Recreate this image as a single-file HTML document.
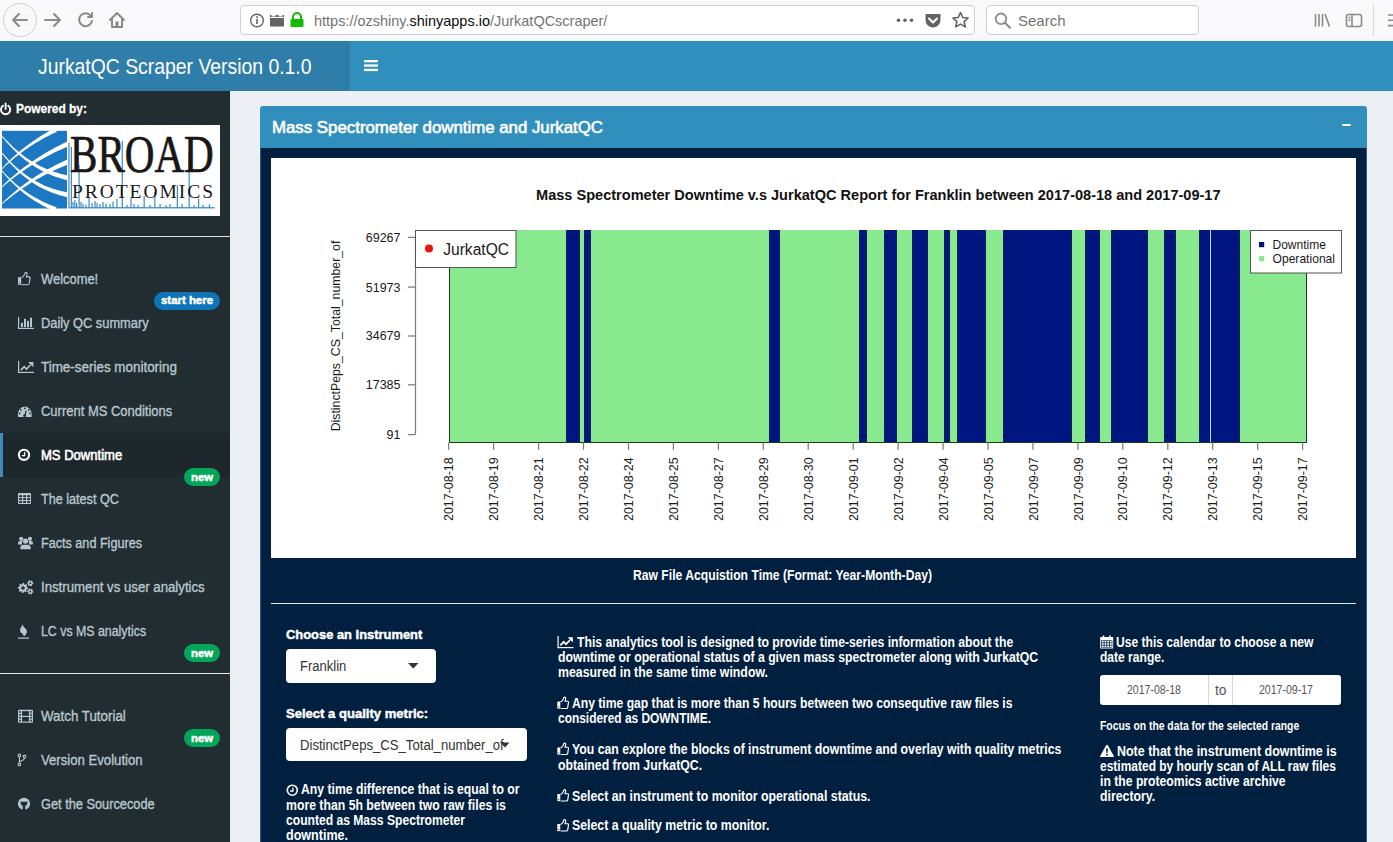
<!DOCTYPE html>
<html><head><meta charset="utf-8">
<style>
html,body{margin:0;padding:0;width:1393px;height:842px;overflow:hidden;background:#ecf0f5;font-family:"Liberation Sans",sans-serif;}
.a{position:absolute;}
.t{position:absolute;white-space:nowrap;line-height:1;transform-origin:0 0;}
#chrome{left:0;top:0;width:1393px;height:40px;background:#f9f9fb;border-bottom:1px solid #f0f6fa;}
#logo{left:0;top:41px;width:350px;height:50px;background:#2f7eaa;}
#nav{left:350px;top:41px;width:1043px;height:50px;background:#318fbe;}
#side{left:0;top:91px;width:230px;height:751px;background:#222d32;}
#boxh{left:260px;top:106px;width:1107px;height:42px;background:#318fbe;border-radius:3px 3px 0 0;}
#boxb{left:260px;top:148px;width:1107px;height:700px;background:#012040;}
.badge{position:absolute;height:18px;border-radius:9px;color:#fff;font-weight:700;font-size:11.5px;line-height:18px;text-align:center;}
</style></head><body>
<div id="chrome" class="a"></div>
<!-- url bar -->
<div class="a" style="left:240px;top:5px;width:733px;height:28px;background:#fff;border:1px solid #cfcfd3;border-radius:4px;"></div>
<div class="a" style="left:986px;top:5px;width:211px;height:28px;background:#fff;border:1px solid #cfcfd3;border-radius:4px;"></div>
<div class="a" style="left:1373px;top:4px;width:1px;height:32px;background:#dcdcde;"></div>
<div class="a" style="left:3px;top:3px;width:32px;height:32px;border:1px solid #cfcfd3;border-radius:50%;"></div>
<svg class="a" style="left:0;top:0" width="1393" height="40" viewBox="0 0 1393 40">
 <g fill="none" stroke="#8a8a8d" stroke-width="2" stroke-linecap="round" stroke-linejoin="round">
  <path d="M13 20h14M19 14l-6 6 6 6"/>
  <path d="M45 20h15M54 14l6 6-6 6"/>
  <path d="M91 16a6.5 6.5 0 1 0 1 5"/><path d="M92 13v4h-4"/>
  <path d="M110 20l7-7 7 7M112 19v8h10v-8"/>
  <circle cx="257" cy="20.5" r="6.3" stroke="#636366" stroke-width="1.4"/>
 </g>
 <path d="M256.2 19h1.6v5h-1.6zM256.2 16.3h1.6v1.6h-1.6z" fill="#636366"/>
 <rect x="115.5" y="21.5" width="3" height="5.5" fill="#8a8a8d"/>
 <path d="M270 15h14v2h-14zM270 18h14v8.5h-14z" fill="#636366"/>
 <path d="M271.5 14.5h4v2h-4zM278.5 14.5h4v2h-4z" fill="#f9f9fa"/>
 <rect x="290.5" y="19" width="13" height="8" rx="1" fill="#12bc00"/>
 <path d="M293 19.5v-2.5a4 4 0 0 1 8 0v2.5" fill="none" stroke="#12bc00" stroke-width="2"/>
 <g fill="#636366"><circle cx="898.5" cy="20.3" r="1.8"/><circle cx="905" cy="20.3" r="1.8"/><circle cx="911.5" cy="20.3" r="1.8"/></g>
 <path d="M925.5 14h15v6a7.5 7.5 0 0 1-15 0z" fill="#636366"/>
 <path d="M929 18.5l4 4 4-4" fill="none" stroke="#fff" stroke-width="2" stroke-linecap="round" stroke-linejoin="round"/>
 <path d="M960.5 12.5l2.3 5 5.3.5-4 3.6 1.2 5.3-4.8-2.8-4.8 2.8 1.2-5.3-4-3.6 5.3-.5z" fill="none" stroke="#636366" stroke-width="1.6" stroke-linejoin="round"/>
 <circle cx="1001" cy="18.8" r="5.3" fill="none" stroke="#8a8a8d" stroke-width="1.8"/>
 <path d="M1005 22.8l5 5" stroke="#8a8a8d" stroke-width="2" stroke-linecap="round"/>
 <g stroke="#8a8a8d" stroke-width="1.6" fill="none">
  <path d="M1315.5 14v12.5M1319 14v12.5M1322.5 14v12.5M1325 14l4.5 12.5"/>
  <rect x="1346.5" y="14.5" width="15" height="12" rx="2"/>
  <path d="M1352 14.5v12M1348.5 17.5h2M1348.5 20h2"/>
  <path d="M1388 15h6M1388 20.3h6M1388 25.6h6"/>
 </g>
</svg>
<div class="t" style="left:314px;top:13.3px;font-size:15px;color:#737373;transform:scaleX(0.965)">https://ozshiny.<span style="color:#0c0c0d">shinyapps.io</span>/JurkatQCscraper/</div>
<div class="t" style="left:1018px;top:12.8px;font-size:15px;color:#737373;">Search</div>

<div id="logo" class="a"></div>
<div id="nav" class="a"></div>
<svg class="a" style="left:364px;top:60px" width="14" height="12"><rect x="0" y="0" width="14" height="2.3" fill="#fff"/><rect x="0" y="4.4" width="14" height="2.3" fill="#fff"/><rect x="0" y="8.8" width="14" height="2.3" fill="#fff"/></svg>

<div id="side" class="a"></div>
<div class="a" style="left:0;top:236px;width:230px;height:1px;background:#dfe3e6;"></div>
<div class="a" style="left:0;top:673px;width:230px;height:1px;background:#e6e9eb;"></div>
<div class="a" style="left:0;top:433px;width:230px;height:44px;background:#1e282c;"></div>
<div class="a" style="left:0;top:433px;width:3px;height:44px;background:#3c8dbc;"></div>
<div class="a" style="left:154px;top:292px;width:66px;height:18px;border-radius:9px;background:#0e75b6;"></div>
<div class="a" style="left:184px;top:468px;width:36px;height:18px;border-radius:9px;background:#02a55a;"></div>
<div class="a" style="left:184px;top:644px;width:36px;height:18px;border-radius:9px;background:#02a55a;"></div>
<div class="a" style="left:184px;top:729px;width:36px;height:18px;border-radius:9px;background:#02a55a;"></div>
<svg class="a" style="left:0;top:125px" width="220" height="91" viewBox="0 125 220 91">
<rect x="0" y="125" width="220" height="91" fill="#fff"/>
<rect x="2" y="130.8" width="65" height="77.7" fill="#1c78c2"/>
<polygon points="2.28,169.15 4.65,166.85 7.06,164.59 9.50,162.38 11.98,160.21 14.50,158.10 17.06,156.03 19.65,154.00 22.28,152.02 24.95,150.09 27.65,148.21 30.39,146.37 33.17,144.57 35.99,142.83 38.84,141.13 41.73,139.47 44.66,137.86 47.63,136.30 50.63,134.78 53.67,133.31 56.75,131.88 54.91,128.11 51.85,129.71 48.83,131.37 45.85,133.06 42.92,134.81 40.02,136.59 37.17,138.42 34.36,140.30 31.59,142.21 28.87,144.17 26.19,146.18 23.55,148.23 20.95,150.32 18.40,152.45 15.89,154.63 13.42,156.85 10.99,159.12 8.61,161.42 6.26,163.77 3.96,166.17 1.71,168.60" fill="#fff"/>
<polygon points="2.30,187.15 5.18,184.66 8.10,182.22 11.07,179.82 14.09,177.47 17.15,175.16 20.26,172.91 23.42,170.69 26.63,168.53 29.88,166.41 33.18,164.34 36.53,162.31 39.92,160.33 43.36,158.40 46.85,156.51 50.39,154.67 53.97,152.87 57.60,151.12 61.28,149.42 65.00,147.76 68.78,146.14 66.81,141.76 63.06,143.58 59.36,145.45 55.71,147.36 52.11,149.31 48.56,151.31 45.07,153.35 41.63,155.43 38.24,157.56 34.91,159.73 31.62,161.95 28.39,164.21 25.22,166.51 22.09,168.86 19.02,171.25 16.00,173.68 13.03,176.16 10.12,178.68 7.25,181.24 4.45,183.85 1.69,186.49" fill="#fff"/>
<polygon points="2.30,204.10 5.18,201.61 8.10,199.18 11.07,196.79 14.08,194.46 17.15,192.18 20.26,189.95 23.41,187.77 26.62,185.64 29.87,183.57 33.17,181.55 36.51,179.57 39.90,177.65 43.34,175.78 46.83,173.96 50.36,172.19 53.94,170.48 57.57,168.81 61.24,167.19 64.96,165.63 68.73,164.11 66.86,159.69 63.11,161.41 59.40,163.18 55.74,165.01 52.14,166.88 48.59,168.80 45.10,170.77 41.65,172.79 38.26,174.86 34.92,176.98 31.64,179.14 28.41,181.35 25.23,183.62 22.10,185.93 19.02,188.29 16.00,190.69 13.03,193.15 10.12,195.65 7.26,198.20 4.45,200.80 1.69,203.44" fill="#fff"/>
<polygon points="1.65,136.26 4.40,139.66 7.20,142.93 10.06,146.08 12.98,149.10 15.95,152.00 18.97,154.77 22.05,157.42 25.19,159.94 28.39,162.33 31.64,164.60 34.95,166.74 38.31,168.75 41.73,170.63 45.22,172.39 48.75,174.01 52.35,175.51 56.00,176.88 59.71,178.12 63.48,179.22 67.29,180.20 68.30,175.50 64.59,174.75 60.93,173.88 57.31,172.87 53.73,171.74 50.20,170.47 46.71,169.08 43.26,167.55 39.85,165.90 36.49,164.11 33.17,162.19 29.89,160.14 26.65,157.96 23.46,155.64 20.31,153.19 17.20,150.61 14.14,147.89 11.12,145.04 8.15,142.06 5.22,138.94 2.34,135.69" fill="#fff"/>
<polygon points="1.64,153.21 4.39,156.70 7.20,160.06 10.06,163.28 12.97,166.37 15.94,169.32 18.97,172.14 22.05,174.82 25.19,177.36 28.38,179.77 31.64,182.04 34.95,184.18 38.32,186.18 41.75,188.04 45.23,189.76 48.77,191.34 52.38,192.79 56.04,194.09 59.75,195.26 63.53,196.28 67.35,197.16 68.24,192.44 64.54,191.79 60.88,190.99 57.27,190.06 53.70,188.99 50.18,187.79 46.69,186.44 43.25,184.95 39.85,183.32 36.49,181.55 33.17,179.64 29.89,177.58 26.66,175.39 23.46,173.05 20.32,170.56 17.21,167.94 14.15,165.17 11.13,162.25 8.16,159.19 5.23,155.99 2.34,152.64" fill="#fff"/>
<polygon points="1.69,171.13 3.95,173.85 6.24,176.49 8.59,179.06 10.97,181.55 13.40,183.97 15.87,186.32 18.38,188.59 20.94,190.78 23.55,192.90 26.19,194.95 28.88,196.91 31.62,198.81 34.40,200.63 37.22,202.37 40.09,204.04 43.01,205.63 45.96,207.14 48.97,208.58 52.01,209.94 55.10,211.22 56.57,207.29 53.51,206.20 50.50,205.04 47.52,203.80 44.57,202.48 41.66,201.08 38.79,199.60 35.95,198.05 33.15,196.41 30.38,194.70 27.64,192.91 24.95,191.04 22.29,189.09 19.66,187.06 17.07,184.95 14.52,182.76 12.00,180.49 9.52,178.14 7.08,175.71 4.67,173.20 2.30,170.61" fill="#fff"/>
<rect x="0" y="125" width="2" height="91" fill="#fff"/><rect x="67" y="125" width="3" height="91" fill="#fff"/>
<rect x="68.5" y="207.2" width="146" height="1.2" fill="#2a7fc4"/>
<rect x="68.4" y="142.8" width="1.1" height="64.7" fill="#2a7fc4"/>
<rect x="70.8" y="146.9" width="1.1" height="60.6" fill="#2a7fc4"/>
<rect x="78.5" y="164.7" width="1.1" height="42.8" fill="#2a7fc4"/>
<rect x="121.7" y="141" width="1.1" height="66.5" fill="#2a7fc4"/>
<rect x="188.6" y="152.2" width="1.1" height="55.3" fill="#2a7fc4"/>
<rect x="154.3" y="191.9" width="1.1" height="15.6" fill="#2a7fc4"/>
<rect x="176.8" y="185.4" width="1.1" height="22.1" fill="#2a7fc4"/>
<rect x="130.5" y="198.4" width="1.1" height="9.1" fill="#2a7fc4"/>
<rect x="88.5" y="198" width="1.1" height="9.5" fill="#2a7fc4"/>
<rect x="116.4" y="199" width="1.1" height="8.5" fill="#2a7fc4"/>
<rect x="143.6" y="196" width="1.1" height="11.5" fill="#2a7fc4"/>
<rect x="198.1" y="199" width="1.1" height="8.5" fill="#2a7fc4"/>
<rect x="208.8" y="204.4" width="1.1" height="3.1" fill="#2a7fc4"/>
<rect x="72.5" y="202" width="1.1" height="5.5" fill="#2a7fc4"/>
<rect x="74.3" y="200" width="1.1" height="7.5" fill="#2a7fc4"/>
<rect x="76.0" y="203" width="1.1" height="4.5" fill="#2a7fc4"/>
<rect x="80.5" y="202" width="1.1" height="5.5" fill="#2a7fc4"/>
<rect x="82.5" y="204" width="1.1" height="3.5" fill="#2a7fc4"/>
<rect x="85.5" y="204.5" width="1.1" height="3.0" fill="#2a7fc4"/>
<rect x="91.5" y="203" width="1.1" height="4.5" fill="#2a7fc4"/>
<rect x="94.5" y="201" width="1.1" height="6.5" fill="#2a7fc4"/>
<rect x="96.5" y="203" width="1.1" height="4.5" fill="#2a7fc4"/>
<rect x="99.5" y="204" width="1.1" height="3.5" fill="#2a7fc4"/>
<rect x="102.5" y="202" width="1.1" height="5.5" fill="#2a7fc4"/>
<rect x="105.5" y="203.5" width="1.1" height="4.0" fill="#2a7fc4"/>
<rect x="109.5" y="204" width="1.1" height="3.5" fill="#2a7fc4"/>
<rect x="112.5" y="201.5" width="1.1" height="6.0" fill="#2a7fc4"/>
<rect x="126.5" y="205" width="1.1" height="2.5" fill="#2a7fc4"/>
<rect x="133.5" y="204" width="1.1" height="3.5" fill="#2a7fc4"/>
<rect x="137.5" y="205" width="1.1" height="2.5" fill="#2a7fc4"/>
<rect x="149.5" y="205" width="1.1" height="2.5" fill="#2a7fc4"/>
<rect x="159.5" y="204" width="1.1" height="3.5" fill="#2a7fc4"/>
<rect x="165.5" y="205" width="1.1" height="2.5" fill="#2a7fc4"/>
<rect x="169.5" y="204" width="1.1" height="3.5" fill="#2a7fc4"/>
<rect x="181.5" y="204" width="1.1" height="3.5" fill="#2a7fc4"/>
<rect x="193.5" y="205" width="1.1" height="2.5" fill="#2a7fc4"/>
<rect x="202.5" y="205" width="1.1" height="2.5" fill="#2a7fc4"/>
<text x="70" y="171.8" font-family="Liberation Serif" font-size="52" fill="#1a1616" stroke="#1a1616" stroke-width="0.7" transform="translate(70 0) scale(0.79 1) translate(-70 0)">BROAD</text>
<text x="72" y="197.8" font-family="Liberation Serif" font-size="19.5" fill="#1a1616" textLength="141" lengthAdjust="spacing">PROTEOMICS</text>
</svg>
<svg class="a" style="left:0;top:91px" width="230" height="751" viewBox="0 91 230 751">
<g fill="none" stroke="#fff" stroke-width="1.9" stroke-linecap="round"><path d="M8.24 105.83A4.6 4.6 0 1 1 2.96 105.83"/><path d="M5.6 103.39999999999999V109.0"/></g>
<g transform="translate(18 272)"><rect x="0" y="5.2" width="3.2" height="7.6" fill="#b8c7ce"/>
<path d="M3.6 5.8L6 3.4Q6.8 1.6 7.2 0.6Q8.8 0.1 9 1.6Q9.1 3 8.2 4.9H11.2Q12.3 5.1 12 6.4L11.2 11.4Q10.9 12.6 9.6 12.7H3.6" fill="none" stroke="#b8c7ce" stroke-width="1.1" stroke-linejoin="round"/>
<circle cx="1.6" cy="11" r="0.6" fill="#222d32"/></g>
<g transform="translate(18 316.8)" fill="#b8c7ce"><rect x="0" y="0" width="1.2" height="12.2"/><rect x="0" y="11" width="16" height="1.2"/>
<rect x="3" y="6" width="2" height="4.3"/><rect x="6" y="2" width="2" height="8.3"/><rect x="9" y="4" width="2" height="6.3"/><rect x="12" y="0.9" width="2" height="9.4"/></g>
<g transform="translate(18 360.8)"><rect x="0" y="0" width="1.2" height="12.2" fill="#b8c7ce"/><rect x="0" y="11" width="16" height="1.2" fill="#b8c7ce"/>
<path d="M2.8 9.3L6.2 5.8L8.5 8.2L12.6 4" fill="none" stroke="#b8c7ce" stroke-width="1.6"/><path d="M10.2 1.2H15.4V6.4z" fill="#b8c7ce"/></g>
<g transform="translate(17.6 406)"><path d="M0.4 11Q-0.6 7 1.8 3.6Q4 0.5 7.2 0.5Q10.4 0.5 12.6 3.6Q15 7 14 11z" fill="#b8c7ce"/>
<rect x="6.4" y="1.6" width="1.6" height="1.6" fill="#222d32"/><rect x="2.6" y="3.2" width="1.5" height="1.5" fill="#222d32"/><rect x="10.4" y="3.2" width="1.5" height="1.5" fill="#222d32"/>
<rect x="1.2" y="6.6" width="1.6" height="1.6" fill="#222d32"/><rect x="11.7" y="6.6" width="1.6" height="1.6" fill="#222d32"/>
<path d="M7.2 9.8L8.6 4.6" stroke="#222d32" stroke-width="1.2"/><circle cx="7" cy="9.7" r="1.4" fill="#222d32"/></g>
<g><circle cx="24" cy="454.8" r="5.1" fill="none" stroke="#fff" stroke-width="2.1"/>
<path d="M24.6 452.0V455.6H21.8" fill="none" stroke="#fff" stroke-width="1.3"/></g>
<g transform="translate(18 493)"><rect x="0" y="0" width="13" height="11" rx="1" fill="#b8c7ce"/><rect x="1.2" y="2.2" width="2.8" height="1.9" fill="#222d32"/><rect x="5.2" y="2.2" width="2.8" height="1.9" fill="#222d32"/><rect x="9.2" y="2.2" width="2.8" height="1.9" fill="#222d32"/><rect x="1.2" y="5.1" width="2.8" height="1.9" fill="#222d32"/><rect x="5.2" y="5.1" width="2.8" height="1.9" fill="#222d32"/><rect x="9.2" y="5.1" width="2.8" height="1.9" fill="#222d32"/><rect x="1.2" y="8.0" width="2.8" height="1.9" fill="#222d32"/><rect x="5.2" y="8.0" width="2.8" height="1.9" fill="#222d32"/><rect x="9.2" y="8.0" width="2.8" height="1.9" fill="#222d32"/></g>
<g transform="translate(18 536.5)" fill="#b8c7ce"><circle cx="3.2" cy="2.3" r="2.1"/><circle cx="12" cy="2.3" r="2.1"/>
<path d="M0 6.6Q0 4.6 2.2 4.6H4.5Q3.6 6 4 8H0.2z"/><path d="M15 6.6Q15 4.6 12.8 4.6H10.5Q11.4 6 11 8H14.8z"/>
<circle cx="7.5" cy="4.6" r="2.7"/><path d="M2.3 12.8Q2 8.6 5 8.3H10Q13 8.6 12.7 12.8z"/></g>
<g transform="translate(18 580)"><polygon points="10.20,8.00 10.10,9.01 8.60,9.49 8.24,10.17 8.68,11.68 7.89,12.32 6.49,11.60 5.76,11.83 5.00,13.20 3.99,13.10 3.51,11.60 2.83,11.24 1.32,11.68 0.68,10.89 1.40,9.49 1.17,8.76 -0.20,8.00 -0.10,6.99 1.40,6.51 1.76,5.83 1.32,4.32 2.11,3.68 3.51,4.40 4.24,4.17 5.00,2.80 6.01,2.90 6.49,4.40 7.17,4.76 8.68,4.32 9.32,5.11 8.60,6.51 8.83,7.24" fill="#b8c7ce"/><circle cx="5" cy="8" r="1.8" fill="#222d32"/><polygon points="15.50,3.20 15.39,4.03 14.29,4.35 13.93,4.83 13.90,5.97 13.13,6.29 12.30,5.50 11.70,5.42 10.70,5.97 10.04,5.46 10.31,4.35 10.08,3.80 9.10,3.20 9.21,2.37 10.31,2.05 10.67,1.57 10.70,0.43 11.47,0.11 12.30,0.90 12.90,0.98 13.90,0.43 14.56,0.94 14.29,2.05 14.52,2.60" fill="#b8c7ce"/><circle cx="12.3" cy="3.2" r="0.9" fill="#222d32"/><polygon points="15.50,11.50 15.39,12.33 14.29,12.65 13.93,13.13 13.90,14.27 13.13,14.59 12.30,13.80 11.70,13.72 10.70,14.27 10.04,13.76 10.31,12.65 10.08,12.10 9.10,11.50 9.21,10.67 10.31,10.35 10.67,9.87 10.70,8.73 11.47,8.41 12.30,9.20 12.90,9.28 13.90,8.73 14.56,9.24 14.29,10.35 14.52,10.90" fill="#b8c7ce"/><circle cx="12.3" cy="11.5" r="0.9" fill="#222d32"/></g>
<g transform="translate(18 624)" fill="#b8c7ce"><path d="M5.2 0Q4.4 1.8 6 3.2Q9.4 5.8 8.8 8.4Q8.2 10.8 5.6 12.4Q6 10.8 4.4 9.8Q1.6 8.2 2 5.8Q2.6 3 5.2 0z"/>
<rect x="0" y="13.5" width="11" height="1.2"/></g>
<g transform="translate(18 709.8)"><rect x="0" y="0" width="15" height="13" rx="1" fill="#b8c7ce"/><rect x="1.2" y="1.3" width="1.6" height="1.7" fill="#222d32"/><rect x="12.2" y="1.3" width="1.6" height="1.7" fill="#222d32"/><rect x="1.2" y="4.2" width="1.6" height="1.7" fill="#222d32"/><rect x="12.2" y="4.2" width="1.6" height="1.7" fill="#222d32"/><rect x="1.2" y="7.1" width="1.6" height="1.7" fill="#222d32"/><rect x="12.2" y="7.1" width="1.6" height="1.7" fill="#222d32"/><rect x="1.2" y="10.0" width="1.6" height="1.7" fill="#222d32"/><rect x="12.2" y="10.0" width="1.6" height="1.7" fill="#222d32"/><rect x="4.1" y="1.4" width="6.8" height="4.6" fill="#222d32"/><rect x="4.1" y="7.2" width="6.8" height="4.6" fill="#222d32"/></g>
<g transform="translate(18 754)" fill="none" stroke="#b8c7ce" stroke-width="1.1"><circle cx="1.4" cy="1.4" r="1.3"/><circle cx="6.5" cy="2.4" r="1.3"/><circle cx="1.4" cy="10.4" r="1.3"/>
<path d="M1.4 2.7V9.1M6.5 3.7Q6.5 6.2 1.6 7.5"/></g>
<g><circle cx="24" cy="803.8" r="6.1" fill="#b8c7ce"/>
<path d="M20.6 800.9L21.8 801.9Q24 801.3 26.2 801.9L27.4 800.9Q27.9 805.0 25.3 805.9V810.1999999999999H22.7V805.9Q20.1 805.0 20.6 800.9z" fill="#222d32"/></g>
</svg>
<div id="boxh" class="a"></div>
<div class="a" style="left:1341.5px;top:124px;width:9.5px;height:2.4px;background:#fff;border-radius:1px;"></div>
<div id="boxb" class="a"></div>
<div class="a" style="left:260px;top:148px;width:1px;height:700px;background:#2a5f8c;"></div>
<div class="a" style="left:1366px;top:148px;width:1px;height:700px;background:#2a5f8c;"></div>
<div class="a" style="left:271px;top:158px;width:1085px;height:400px;background:#fff;"></div>
<svg class="a" style="left:271px;top:158px" width="1085" height="400" viewBox="271 158 1085 400">
<rect x="449" y="230" width="858" height="212.5" fill="#89e98f"/>
<rect x="566" y="230" width="14" height="212.5" fill="#011580"/>
<path d="M566.5 230V442.5M579.5 230V442.5" stroke="#0a2a30" stroke-width="1" opacity="0.5"/>
<rect x="584" y="230" width="7" height="212.5" fill="#011580"/>
<path d="M584.5 230V442.5M590.5 230V442.5" stroke="#0a2a30" stroke-width="1" opacity="0.5"/>
<rect x="769" y="230" width="11" height="212.5" fill="#011580"/>
<path d="M769.5 230V442.5M779.5 230V442.5" stroke="#0a2a30" stroke-width="1" opacity="0.5"/>
<rect x="859" y="230" width="8" height="212.5" fill="#011580"/>
<path d="M859.5 230V442.5M866.5 230V442.5" stroke="#0a2a30" stroke-width="1" opacity="0.5"/>
<rect x="884" y="230" width="13" height="212.5" fill="#011580"/>
<path d="M884.5 230V442.5M896.5 230V442.5" stroke="#0a2a30" stroke-width="1" opacity="0.5"/>
<rect x="912" y="230" width="16" height="212.5" fill="#011580"/>
<path d="M912.5 230V442.5M927.5 230V442.5" stroke="#0a2a30" stroke-width="1" opacity="0.5"/>
<rect x="944" y="230" width="6" height="212.5" fill="#011580"/>
<path d="M944.5 230V442.5M949.5 230V442.5" stroke="#0a2a30" stroke-width="1" opacity="0.5"/>
<rect x="957" y="230" width="29" height="212.5" fill="#011580"/>
<path d="M957.5 230V442.5M985.5 230V442.5" stroke="#0a2a30" stroke-width="1" opacity="0.5"/>
<rect x="1003" y="230" width="69" height="212.5" fill="#011580"/>
<path d="M1003.5 230V442.5M1071.5 230V442.5" stroke="#0a2a30" stroke-width="1" opacity="0.5"/>
<rect x="1085" y="230" width="15" height="212.5" fill="#011580"/>
<path d="M1085.5 230V442.5M1099.5 230V442.5" stroke="#0a2a30" stroke-width="1" opacity="0.5"/>
<rect x="1111" y="230" width="37" height="212.5" fill="#011580"/>
<path d="M1111.5 230V442.5M1147.5 230V442.5" stroke="#0a2a30" stroke-width="1" opacity="0.5"/>
<rect x="1164" y="230" width="12" height="212.5" fill="#011580"/>
<path d="M1164.5 230V442.5M1175.5 230V442.5" stroke="#0a2a30" stroke-width="1" opacity="0.5"/>
<rect x="1199" y="230" width="41" height="212.5" fill="#011580"/>
<path d="M1199.5 230V442.5M1239.5 230V442.5" stroke="#0a2a30" stroke-width="1" opacity="0.5"/>
<rect x="1210" y="230" width="1" height="212.5" fill="#a8e8e0"/>
<path d="M449.5 230V442.5H1306.5V230" fill="none" stroke="#1a3a1a" stroke-width="1"/>
<g stroke="#7c7c7c" stroke-width="1.25" fill="none">
<path d="M415.5 237.4V434.6"/>
<path d="M408 237.4H415.5"/>
<path d="M408 287.1H415.5"/>
<path d="M408 336H415.5"/>
<path d="M408 384.8H415.5"/>
<path d="M408 434.6H415.5"/>
</g>
<text x="400.5" y="241.8" font-size="12.5" text-anchor="end" fill="#1a1a1a">69267</text>
<text x="400.5" y="291.5" font-size="12.5" text-anchor="end" fill="#1a1a1a">51973</text>
<text x="400.5" y="340.4" font-size="12.5" text-anchor="end" fill="#1a1a1a">34679</text>
<text x="400.5" y="389.2" font-size="12.5" text-anchor="end" fill="#1a1a1a">17385</text>
<text x="400.5" y="439.0" font-size="12.5" text-anchor="end" fill="#1a1a1a">91</text>
<g stroke="#7c7c7c" stroke-width="1.25" fill="none">
<path d="M448.7 442.5V449.8"/>
<path d="M493.6 442.5V449.8"/>
<path d="M538.6 442.5V449.8"/>
<path d="M583.5 442.5V449.8"/>
<path d="M628.5 442.5V449.8"/>
<path d="M673.4 442.5V449.8"/>
<path d="M718.4 442.5V449.8"/>
<path d="M763.3 442.5V449.8"/>
<path d="M808.2 442.5V449.8"/>
<path d="M853.2 442.5V449.8"/>
<path d="M898.1 442.5V449.8"/>
<path d="M943.1 442.5V449.8"/>
<path d="M988.0 442.5V449.8"/>
<path d="M1032.9 442.5V449.8"/>
<path d="M1077.9 442.5V449.8"/>
<path d="M1122.8 442.5V449.8"/>
<path d="M1167.8 442.5V449.8"/>
<path d="M1212.7 442.5V449.8"/>
<path d="M1257.7 442.5V449.8"/>
<path d="M1302.6 442.5V449.8"/>
</g>
<text transform="translate(453.3 457.4) rotate(-90)" font-size="12.4" text-anchor="end" fill="#1a1a1a" textLength="63.6" lengthAdjust="spacingAndGlyphs">2017-08-18</text>
<text transform="translate(498.2 457.4) rotate(-90)" font-size="12.4" text-anchor="end" fill="#1a1a1a" textLength="63.6" lengthAdjust="spacingAndGlyphs">2017-08-19</text>
<text transform="translate(543.2 457.4) rotate(-90)" font-size="12.4" text-anchor="end" fill="#1a1a1a" textLength="63.6" lengthAdjust="spacingAndGlyphs">2017-08-21</text>
<text transform="translate(588.1 457.4) rotate(-90)" font-size="12.4" text-anchor="end" fill="#1a1a1a" textLength="63.6" lengthAdjust="spacingAndGlyphs">2017-08-22</text>
<text transform="translate(633.1 457.4) rotate(-90)" font-size="12.4" text-anchor="end" fill="#1a1a1a" textLength="63.6" lengthAdjust="spacingAndGlyphs">2017-08-24</text>
<text transform="translate(678.0 457.4) rotate(-90)" font-size="12.4" text-anchor="end" fill="#1a1a1a" textLength="63.6" lengthAdjust="spacingAndGlyphs">2017-08-25</text>
<text transform="translate(723.0 457.4) rotate(-90)" font-size="12.4" text-anchor="end" fill="#1a1a1a" textLength="63.6" lengthAdjust="spacingAndGlyphs">2017-08-27</text>
<text transform="translate(767.9 457.4) rotate(-90)" font-size="12.4" text-anchor="end" fill="#1a1a1a" textLength="63.6" lengthAdjust="spacingAndGlyphs">2017-08-29</text>
<text transform="translate(812.8 457.4) rotate(-90)" font-size="12.4" text-anchor="end" fill="#1a1a1a" textLength="63.6" lengthAdjust="spacingAndGlyphs">2017-08-30</text>
<text transform="translate(857.8 457.4) rotate(-90)" font-size="12.4" text-anchor="end" fill="#1a1a1a" textLength="63.6" lengthAdjust="spacingAndGlyphs">2017-09-01</text>
<text transform="translate(902.7 457.4) rotate(-90)" font-size="12.4" text-anchor="end" fill="#1a1a1a" textLength="63.6" lengthAdjust="spacingAndGlyphs">2017-09-02</text>
<text transform="translate(947.7 457.4) rotate(-90)" font-size="12.4" text-anchor="end" fill="#1a1a1a" textLength="63.6" lengthAdjust="spacingAndGlyphs">2017-09-04</text>
<text transform="translate(992.6 457.4) rotate(-90)" font-size="12.4" text-anchor="end" fill="#1a1a1a" textLength="63.6" lengthAdjust="spacingAndGlyphs">2017-09-05</text>
<text transform="translate(1037.5 457.4) rotate(-90)" font-size="12.4" text-anchor="end" fill="#1a1a1a" textLength="63.6" lengthAdjust="spacingAndGlyphs">2017-09-07</text>
<text transform="translate(1082.5 457.4) rotate(-90)" font-size="12.4" text-anchor="end" fill="#1a1a1a" textLength="63.6" lengthAdjust="spacingAndGlyphs">2017-09-09</text>
<text transform="translate(1127.4 457.4) rotate(-90)" font-size="12.4" text-anchor="end" fill="#1a1a1a" textLength="63.6" lengthAdjust="spacingAndGlyphs">2017-09-10</text>
<text transform="translate(1172.4 457.4) rotate(-90)" font-size="12.4" text-anchor="end" fill="#1a1a1a" textLength="63.6" lengthAdjust="spacingAndGlyphs">2017-09-12</text>
<text transform="translate(1217.3 457.4) rotate(-90)" font-size="12.4" text-anchor="end" fill="#1a1a1a" textLength="63.6" lengthAdjust="spacingAndGlyphs">2017-09-13</text>
<text transform="translate(1262.3 457.4) rotate(-90)" font-size="12.4" text-anchor="end" fill="#1a1a1a" textLength="63.6" lengthAdjust="spacingAndGlyphs">2017-09-15</text>
<text transform="translate(1307.2 457.4) rotate(-90)" font-size="12.4" text-anchor="end" fill="#1a1a1a" textLength="63.6" lengthAdjust="spacingAndGlyphs">2017-09-17</text>
<text transform="translate(340.3 336) rotate(-90)" font-size="12.3" text-anchor="middle" fill="#1a1a1a">DistinctPeps_CS_Total_number_of</text>
<text x="878.3" y="199.8" font-size="14.55" font-weight="700" text-anchor="middle" fill="#111">Mass Spectrometer Downtime v.s JurkatQC Report for Franklin between 2017-08-18 and 2017-09-17</text>
<rect x="415.5" y="230.5" width="100.5" height="37" fill="#fff" stroke="#555" stroke-width="1"/>
<circle cx="429" cy="248.5" r="4" fill="#e8140f"/>
<text x="443.2" y="254.7" font-size="15.6" fill="#1a1a1a">JurkatQC</text>
<rect x="1250.5" y="230.5" width="91" height="42.5" fill="#fff" stroke="#555" stroke-width="1"/>
<rect x="1259" y="242" width="5.2" height="5.2" fill="#011580"/>
<rect x="1259" y="256" width="5.2" height="5.2" fill="#89e98f"/>
<text x="1272.5" y="248.7" font-size="12" fill="#1a1a1a">Downtime</text>
<text x="1272.5" y="262.5" font-size="12.1" fill="#1a1a1a">Operational</text>
</svg>
<div class="a" style="left:271px;top:603px;width:1085px;height:1px;background:#e8e8e8;"></div>
<!-- selects -->
<div class="a" style="left:286px;top:649px;width:150px;height:34px;background:#fff;border-radius:4px;"></div>
<svg class="a" style="left:408px;top:662.5px" width="11" height="6"><path d="M0 0h10.5L5.25 5.5z" fill="#333"/></svg>
<div class="a" style="left:286px;top:728px;width:241px;height:33px;background:#fff;border-radius:4px;"></div>
<!-- date range -->
<div class="a" style="left:1100px;top:675px;width:241px;height:30px;background:#fff;border-radius:3px;"></div>
<div class="a" style="left:1208px;top:675px;width:1px;height:30px;background:#d2d6de;"></div>
<div class="a" style="left:1231.5px;top:675px;width:1px;height:30px;background:#d2d6de;"></div>
<div class="t" style="left:38.20px;top:57.00px;font-size:21.5px;font-weight:400;color:#fff;transform:scaleX(0.9011);">JurkatQC Scraper Version 0.1.0</div>
<div class="t" style="left:15.50px;top:102.07px;font-size:13.5px;font-weight:700;color:#fff;transform:scaleX(0.8844);-webkit-text-stroke:0.3px #fff;">Powered by:</div>
<div class="t" style="left:41.00px;top:272.15px;font-size:14px;font-weight:400;color:#b8c7ce;transform:scaleX(0.9228);-webkit-text-stroke:0.35px currentColor;">Welcome!</div>
<div class="t" style="left:41.00px;top:316.15px;font-size:14px;font-weight:400;color:#b8c7ce;transform:scaleX(0.9160);-webkit-text-stroke:0.35px currentColor;">Daily QC summary</div>
<div class="t" style="left:41.00px;top:360.15px;font-size:14px;font-weight:400;color:#b8c7ce;transform:scaleX(0.9587);-webkit-text-stroke:0.35px currentColor;">Time-series monitoring</div>
<div class="t" style="left:41.00px;top:404.15px;font-size:14px;font-weight:400;color:#b8c7ce;transform:scaleX(0.9271);-webkit-text-stroke:0.35px currentColor;">Current MS Conditions</div>
<div class="t" style="left:41.00px;top:448.15px;font-size:14px;font-weight:400;color:#fff;transform:scaleX(0.9318);-webkit-text-stroke:0.6px currentColor;">MS Downtime</div>
<div class="t" style="left:41.00px;top:492.15px;font-size:14px;font-weight:400;color:#b8c7ce;transform:scaleX(0.9019);-webkit-text-stroke:0.35px currentColor;">The latest QC</div>
<div class="t" style="left:41.00px;top:536.15px;font-size:14px;font-weight:400;color:#b8c7ce;transform:scaleX(0.9013);-webkit-text-stroke:0.35px currentColor;">Facts and Figures</div>
<div class="t" style="left:41.00px;top:580.15px;font-size:14px;font-weight:400;color:#b8c7ce;transform:scaleX(0.9434);-webkit-text-stroke:0.35px currentColor;">Instrument vs user analytics</div>
<div class="t" style="left:41.00px;top:624.15px;font-size:14px;font-weight:400;color:#b8c7ce;transform:scaleX(0.8828);-webkit-text-stroke:0.35px currentColor;">LC vs MS analytics</div>
<div class="t" style="left:41.00px;top:709.15px;font-size:14px;font-weight:400;color:#b8c7ce;transform:scaleX(0.9531);-webkit-text-stroke:0.35px currentColor;">Watch Tutorial</div>
<div class="t" style="left:41.00px;top:753.15px;font-size:14px;font-weight:400;color:#b8c7ce;transform:scaleX(0.9391);-webkit-text-stroke:0.35px currentColor;">Version Evolution</div>
<div class="t" style="left:41.00px;top:797.15px;font-size:14px;font-weight:400;color:#b8c7ce;transform:scaleX(0.9130);-webkit-text-stroke:0.35px currentColor;">Get the Sourcecode</div>
<div class="t" style="left:161.00px;top:295.43px;font-size:11.3px;font-weight:700;color:#fff;transform:scaleX(1.0097);-webkit-text-stroke:0.5px #fff;">start here</div>
<div class="t" style="left:191.00px;top:471.63px;font-size:11.3px;font-weight:700;color:#fff;-webkit-text-stroke:0.5px #fff;">new</div>
<div class="t" style="left:191.00px;top:647.63px;font-size:11.3px;font-weight:700;color:#fff;-webkit-text-stroke:0.5px #fff;">new</div>
<div class="t" style="left:191.00px;top:732.63px;font-size:11.3px;font-weight:700;color:#fff;-webkit-text-stroke:0.5px #fff;">new</div>
<div class="t" style="left:271.50px;top:119.03px;font-size:16.5px;font-weight:400;color:#fff;transform:scaleX(1.0196);-webkit-text-stroke:0.6px #fff;">Mass Spectrometer downtime and JurkatQC</div>
<div class="t" style="left:633.00px;top:568.15px;font-size:14px;font-weight:700;color:#fff;transform:scaleX(0.8683);">Raw File Acquistion Time (Format: Year-Month-Day)</div>
<div class="t" style="left:286.30px;top:627.57px;font-size:13.5px;font-weight:700;color:#fff;transform:scaleX(0.9564);-webkit-text-stroke:0.45px #fff;">Choose an Instrument</div>
<div class="t" style="left:299.70px;top:658.85px;font-size:14px;font-weight:400;color:#333;transform:scaleX(0.9298);">Franklin</div>
<div class="t" style="left:286.30px;top:706.57px;font-size:13.5px;font-weight:700;color:#fff;transform:scaleX(0.9669);-webkit-text-stroke:0.45px #fff;">Select a quality metric:</div>
<div class="t" style="left:299.70px;top:737.85px;font-size:14px;font-weight:400;color:#333;transform:scaleX(0.9382);">DistinctPeps_CS_Total_number_of</div>
<div class="t" style="left:301.00px;top:782.45px;font-size:14px;font-weight:700;color:#fff;transform:scaleX(0.8723);">Any time difference that is equal to or</div>
<div class="t" style="left:286.30px;top:797.55px;font-size:14px;font-weight:700;color:#fff;transform:scaleX(0.8751);">more than 5h between two raw files is</div>
<div class="t" style="left:286.30px;top:812.65px;font-size:14px;font-weight:700;color:#fff;transform:scaleX(0.8649);">counted as Mass Spectrometer</div>
<div class="t" style="left:286.30px;top:827.65px;font-size:14px;font-weight:700;color:#fff;transform:scaleX(0.8955);">downtime.</div>
<div class="t" style="left:576.50px;top:635.15px;font-size:14px;font-weight:700;color:#fff;transform:scaleX(0.8720);">This analytics tool is designed to provide time-series information about the</div>
<div class="t" style="left:557.50px;top:650.15px;font-size:14px;font-weight:700;color:#fff;transform:scaleX(0.8743);">downtime or operational status of a given mass spectrometer along with JurkatQC</div>
<div class="t" style="left:557.50px;top:665.15px;font-size:14px;font-weight:700;color:#fff;transform:scaleX(0.8811);">measured in the same time window.</div>
<div class="t" style="left:572.40px;top:696.15px;font-size:14px;font-weight:700;color:#fff;transform:scaleX(0.8671);">Any time gap that is more than 5 hours between two consequtive raw files is</div>
<div class="t" style="left:557.50px;top:711.15px;font-size:14px;font-weight:700;color:#fff;transform:scaleX(0.8514);">considered as DOWNTIME.</div>
<div class="t" style="left:572.40px;top:742.15px;font-size:14px;font-weight:700;color:#fff;transform:scaleX(0.8752);">You can explore the blocks of instrument downtime and overlay with quality metrics</div>
<div class="t" style="left:557.50px;top:757.65px;font-size:14px;font-weight:700;color:#fff;transform:scaleX(0.8779);">obtained from JurkatQC.</div>
<div class="t" style="left:572.40px;top:788.65px;font-size:14px;font-weight:700;color:#fff;transform:scaleX(0.8801);">Select an instrument to monitor operational status.</div>
<div class="t" style="left:572.40px;top:818.35px;font-size:14px;font-weight:700;color:#fff;transform:scaleX(0.8810);">Select a quality metric to monitor.</div>
<div class="t" style="left:1116.00px;top:635.15px;font-size:14px;font-weight:700;color:#fff;transform:scaleX(0.8630);">Use this calendar to choose a new</div>
<div class="t" style="left:1100.20px;top:650.15px;font-size:14px;font-weight:700;color:#fff;transform:scaleX(0.8607);">date range.</div>
<div class="t" style="left:1127.00px;top:683.84px;font-size:12px;font-weight:400;color:#555;transform:scaleX(0.8796);">2017-08-18</div>
<div class="t" style="left:1214.50px;top:682.65px;font-size:14px;font-weight:400;color:#555;transform:scaleX(0.9840);">to</div>
<div class="t" style="left:1259.00px;top:683.84px;font-size:12px;font-weight:400;color:#555;transform:scaleX(0.8796);">2017-09-17</div>
<div class="t" style="left:1100.20px;top:719.84px;font-size:12px;font-weight:700;color:#fff;transform:scaleX(0.8634);">Focus on the data for the selected range</div>
<div class="t" style="left:1117.00px;top:744.15px;font-size:14px;font-weight:700;color:#fff;transform:scaleX(0.8906);">Note that the instrument downtime is</div>
<div class="t" style="left:1100.20px;top:758.85px;font-size:14px;font-weight:700;color:#fff;transform:scaleX(0.8562);">estimated by hourly scan of ALL raw files</div>
<div class="t" style="left:1100.20px;top:773.85px;font-size:14px;font-weight:700;color:#fff;transform:scaleX(0.8705);">in the proteomics active archive</div>
<div class="t" style="left:1100.20px;top:789.15px;font-size:14px;font-weight:700;color:#fff;transform:scaleX(0.8795);">directory.</div>
<svg class="a" style="left:500px;top:742px" width="11" height="6"><path d="M0.5 0.5h9L5 5.5z" fill="#333"/></svg>
<svg class="a" style="left:271px;top:604px" width="1090" height="238" viewBox="271 604 1090 238">
<g transform="translate(557.5 636)"><rect x="0" y="0" width="1.2" height="12.2" fill="#fff"/><rect x="0" y="11" width="16" height="1.2" fill="#fff"/>
<path d="M2.8 9.3L6.2 5.8L8.5 8.2L12.6 4" fill="none" stroke="#fff" stroke-width="1.7"/><path d="M10.2 1.2H15.4V6.4z" fill="#fff"/></g>
<g transform="translate(557.3 696.7) scale(0.93)"><g transform="translate(0 0)"><rect x="0" y="5.2" width="3.2" height="7.6" fill="#fff"/>
<path d="M3.6 5.8L6 3.4Q6.8 1.6 7.2 0.6Q8.8 0.1 9 1.6Q9.1 3 8.2 4.9H11.2Q12.3 5.1 12 6.4L11.2 11.4Q10.9 12.6 9.6 12.7H3.6" fill="none" stroke="#fff" stroke-width="1.25" stroke-linejoin="round"/>
<circle cx="1.6" cy="11" r="0.6" fill="#222d32"/></g></g>
<g transform="translate(557.3 742.7) scale(0.93)"><g transform="translate(0 0)"><rect x="0" y="5.2" width="3.2" height="7.6" fill="#fff"/>
<path d="M3.6 5.8L6 3.4Q6.8 1.6 7.2 0.6Q8.8 0.1 9 1.6Q9.1 3 8.2 4.9H11.2Q12.3 5.1 12 6.4L11.2 11.4Q10.9 12.6 9.6 12.7H3.6" fill="none" stroke="#fff" stroke-width="1.25" stroke-linejoin="round"/>
<circle cx="1.6" cy="11" r="0.6" fill="#222d32"/></g></g>
<g transform="translate(557.3 789.2) scale(0.93)"><g transform="translate(0 0)"><rect x="0" y="5.2" width="3.2" height="7.6" fill="#fff"/>
<path d="M3.6 5.8L6 3.4Q6.8 1.6 7.2 0.6Q8.8 0.1 9 1.6Q9.1 3 8.2 4.9H11.2Q12.3 5.1 12 6.4L11.2 11.4Q10.9 12.6 9.6 12.7H3.6" fill="none" stroke="#fff" stroke-width="1.25" stroke-linejoin="round"/>
<circle cx="1.6" cy="11" r="0.6" fill="#222d32"/></g></g>
<g transform="translate(557.3 819.2) scale(0.93)"><g transform="translate(0 0)"><rect x="0" y="5.2" width="3.2" height="7.6" fill="#fff"/>
<path d="M3.6 5.8L6 3.4Q6.8 1.6 7.2 0.6Q8.8 0.1 9 1.6Q9.1 3 8.2 4.9H11.2Q12.3 5.1 12 6.4L11.2 11.4Q10.9 12.6 9.6 12.7H3.6" fill="none" stroke="#fff" stroke-width="1.25" stroke-linejoin="round"/>
<circle cx="1.6" cy="11" r="0.6" fill="#222d32"/></g></g>
<g><circle cx="292.3" cy="790.2" r="5.0" fill="none" stroke="#fff" stroke-width="1.6"/>
<path d="M292.90000000000003 787.4000000000001V791.0H290.1" fill="none" stroke="#fff" stroke-width="1.3"/></g>
<g transform="translate(1100.2 635.5)"><rect x="0" y="1.5" width="13" height="11.5" fill="#fff"/><rect x="0.9" y="4.8" width="11.2" height="7.3" fill="#012040"/><rect x="1.6" y="5.4" width="1.9" height="1.6" fill="#fff"/><rect x="4.300000000000001" y="5.4" width="1.9" height="1.6" fill="#fff"/><rect x="7.0" y="5.4" width="1.9" height="1.6" fill="#fff"/><rect x="9.700000000000001" y="5.4" width="1.9" height="1.6" fill="#fff"/><rect x="1.6" y="7.7" width="1.9" height="1.6" fill="#fff"/><rect x="4.300000000000001" y="7.7" width="1.9" height="1.6" fill="#fff"/><rect x="7.0" y="7.7" width="1.9" height="1.6" fill="#fff"/><rect x="9.700000000000001" y="7.7" width="1.9" height="1.6" fill="#fff"/><rect x="1.6" y="10.0" width="1.9" height="1.6" fill="#fff"/><rect x="4.300000000000001" y="10.0" width="1.9" height="1.6" fill="#fff"/><rect x="7.0" y="10.0" width="1.9" height="1.6" fill="#fff"/><rect x="9.700000000000001" y="10.0" width="1.9" height="1.6" fill="#fff"/><rect x="2.5" y="0" width="1.6" height="3" fill="#fff"/><rect x="8.9" y="0" width="1.6" height="3" fill="#fff"/></g>
<g transform="translate(1100 744.5)"><path d="M7 0.3Q7.6 0.3 8 1L13.8 11.4Q14.2 12.5 13.2 12.6H0.8Q-0.2 12.5 0.2 11.4L6 1Q6.4 0.3 7 0.3z" fill="#fff"/>
<path d="M6.1 4H7.9L7.6 8.6H6.4z" fill="#012040"/><rect x="6.2" y="9.5" width="1.6" height="1.6" fill="#012040"/></g>
</svg>
</body></html>
